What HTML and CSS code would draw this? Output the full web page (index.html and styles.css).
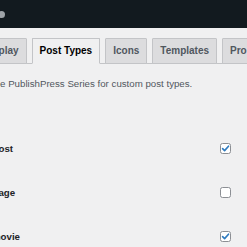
FILE: index.html
```html
<!DOCTYPE html>
<html lang="en">
<head>
<meta charset="utf-8">
<title>Series Settings</title>
<link rel="stylesheet" href="styles.css">
</head>
<body>
<div class="adminbar"><span class="dot"></span></div>
<div class="wrap">
  <nav class="tabs">
    <span class="tab">Display</span>
    <span class="tab active">Post Types</span>
    <span class="tab">Icons</span>
    <span class="tab">Templates</span>
    <span class="tab">Pro Features</span>
  </nav>
  <div class="content">
    <p class="desc">the PublishPress Series for custom post types.</p>
    <div class="row"><span class="label">Post</span><span class="check on"><svg viewBox="0 0 11 11" width="11" height="11"><path d="M2.6 5.6 L4.6 7.6 L8.5 3.2" fill="none" stroke="#2f7bbf" stroke-width="1.6" stroke-linecap="round" stroke-linejoin="round"/></svg></span></div>
    <div class="row"><span class="label">Page</span><span class="check"></span></div>
    <div class="row"><span class="label">movie</span><span class="check on"><svg viewBox="0 0 11 11" width="11" height="11"><path d="M2.6 5.6 L4.6 7.6 L8.5 3.2" fill="none" stroke="#2f7bbf" stroke-width="1.6" stroke-linecap="round" stroke-linejoin="round"/></svg></span></div>
  </div>
</div>
</body>
</html>
```
FILE: styles.css
```css
html, body {
  margin: 0;
  padding: 0;
}
body {
  background: #f0f0f1;
  font-family: "Liberation Sans", Arial, sans-serif;
  overflow: hidden;
  width: 247px;
  height: 247px;
}
.adminbar {
  height: 28px;
  background: #121a1f;
  display: flex;
  align-items: center;
}
.dot {
  width: 7px;
  height: 7px;
  border-radius: 50%;
  background: #9ea3a8;
  margin-left: -2px;
}
.wrap {
  padding-top: 10px;
}
.tabs {
  display: flex;
  gap: 5px;
  margin-left: -25px;
  border-bottom: 1px solid #c3c4c7;
  white-space: nowrap;
}
.tab {
  flex: none;
  height: 24px;
  line-height: 24px;
  padding: 0 7px;
  border: 1px solid #c3c4c7;
  border-radius: 1px 1px 0 0;
  background: #dcdcde;
  color: #50575e;
  font-size: 10px;
  font-weight: bold;
  margin-bottom: -1px;
}
.tab.active {
  background: #f0f0f1;
  color: #000;
  border-bottom-color: #f0f0f1;
}
.content {
  margin-left: -8px;
  padding-right: 16px;
}
.desc {
  margin: 13px 0 35px;
  font-size: 9.7px;
  line-height: 14px;
  color: #50575e;
  white-space: nowrap;
}
.row {
  height: 44px;
  display: flex;
  align-items: center;
  justify-content: space-between;
}
.label {
  font-size: 9.7px;
  font-weight: bold;
  color: #1d2327;
}
.check {
  width: 11px;
  height: 11px;
  box-sizing: border-box;
  border: 1px solid #8c8f94;
  border-radius: 2.5px;
  background: #fff;
  position: relative;
}
.check svg {
  position: absolute;
  left: -1px;
  top: -1px;
}
```
